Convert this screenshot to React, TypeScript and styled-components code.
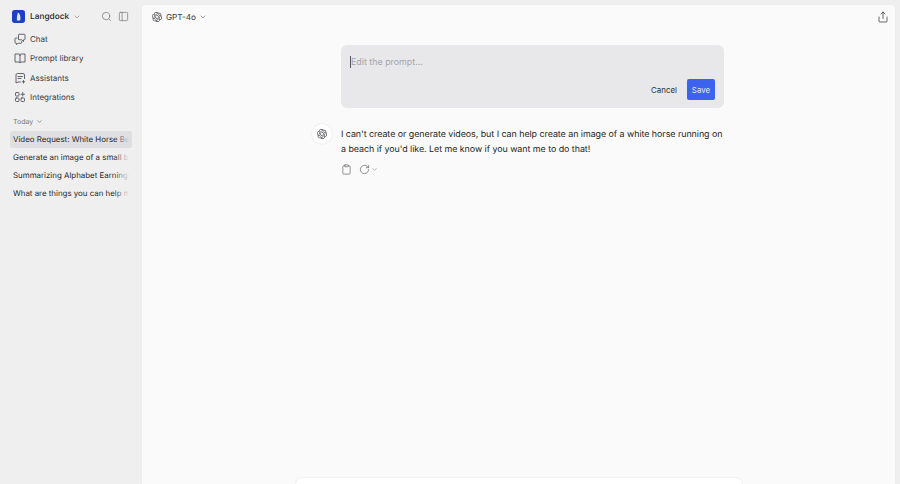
import React from 'react';
import styled, { createGlobalStyle } from 'styled-components';
import { ChevronDown, Clipboard, PanelLeft, RotateCw, Search, Share } from 'lucide-react';
import { SiOpenai } from 'react-icons/si';

const GlobalStyle = createGlobalStyle`
  html, body {
    margin: 0;
    padding: 0;
    height: 100%;
    overflow: hidden;
    background: #efeff0;
    font-family: Inter, "Liberation Sans", sans-serif;
    text-rendering: geometricPrecision;
  }
  #root {
    height: 100%;
  }
`;

const ICON_COLOR = '#55565c';

const LogoIcon = () => (
  <svg width="13" height="13" viewBox="0 0 12 12">
    <rect width="12" height="12" rx="2.5" fill="#1d3fc4" />
    <path d="M5.2 2.2 C6.6 2.4 7.4 4 7.6 5.6 C7.8 7.4 8 8.8 7.4 9.8 L4.4 9.8 C4.8 8.4 4.4 7.4 4.6 6 C4.8 4.6 5.4 3.4 5.2 2.2Z" fill="#dfe6fb" />
  </svg>
);

const ChatIcon = () => (
  <svg width="12" height="12" viewBox="0 0 24 24" fill="none" stroke={ICON_COLOR} strokeWidth="1.8" strokeLinecap="round" strokeLinejoin="round">
    <path d="M9 13V4a1.5 1.5 0 0 1 1.5-1.5h10A1.5 1.5 0 0 1 22 4v8a1.5 1.5 0 0 1-1.5 1.5H19V17l-3.5-3.5H11" />
    <path d="M6 10H3.5A1.5 1.5 0 0 0 2 11.5V19a1.5 1.5 0 0 0 1.5 1.5H5V23l3.5-2.5H14a1.5 1.5 0 0 0 1.5-1.5v-2" />
  </svg>
);

const LibraryIcon = () => (
  <svg width="12" height="12" viewBox="0 0 24 24" fill="none" stroke={ICON_COLOR} strokeWidth="1.8" strokeLinecap="round" strokeLinejoin="round">
    <path d="M12 6.5C12 5 11 4 9.5 4H2v16h8c1.1 0 2 .9 2 1.5" />
    <path d="M12 6.5C12 5 13 4 14.5 4H22v16h-8c-1.1 0-2 .9-2 1.5V6.5Z" />
  </svg>
);

const AssistantsIcon = () => (
  <svg width="12" height="12" viewBox="0 0 24 24" fill="none" stroke={ICON_COLOR} strokeWidth="1.8" strokeLinecap="round" strokeLinejoin="round">
    <path d="M13 20H8l-4 2V6a3 3 0 0 1 3-3h11a3 3 0 0 1 3 3v7" />
    <path d="M8 9h9M8 13h6" />
    <path d="M19 17v5M16.5 19.5h5" />
  </svg>
);

const IntegrationsIcon = () => (
  <svg width="12" height="12" viewBox="0 0 24 24" fill="none" stroke={ICON_COLOR} strokeWidth="1.8" strokeLinecap="round" strokeLinejoin="round">
    <rect x="3" y="3" width="7" height="7" rx="1.5" />
    <rect x="3" y="14" width="7" height="7" rx="1.5" />
    <rect x="14" y="14" width="7" height="7" rx="1.5" />
    <path d="M17.5 3v7M14 6.5h7" />
  </svg>
);

const navItems = [
  { label: 'Chat', icon: <ChatIcon /> },
  { label: 'Prompt library', icon: <LibraryIcon /> },
  { label: 'Assistants', icon: <AssistantsIcon /> },
  { label: 'Integrations', icon: <IntegrationsIcon /> },
];

const chats = [
  'Video Request: White Horse Be',
  'Generate an image of a small be',
  'Summarizing Alphabet Earnings',
  'What are things you can help m',
];

export default function App() {
  return (
    <Page>
      <GlobalStyle />
      <Sidebar>
        <BrandRow>
          <LogoIcon />
          <BrandName>Langdock</BrandName>
          <ChevronDown size={8} color="#8a8b90" />
          <BrandActions>
            <Search size={11} color="#77787d" strokeWidth={1.6} />
            <PanelLeft size={11} color="#77787d" strokeWidth={1.6} />
          </BrandActions>
        </BrandRow>
        <NavList>
          {navItems.map(item => (
            <NavItem key={item.label}>
              {item.icon}
              <span>{item.label}</span>
            </NavItem>
          ))}
        </NavList>
        <SectionLabel>
          Today
          <ChevronDown size={7} color="#77787d" strokeWidth={2.4} />
        </SectionLabel>
        <ChatList>
          {chats.map((chat, index) => (
            <ChatItem key={chat} $active={index === 0}>
              <ChatTitle>{chat}</ChatTitle>
              <ChatFade $active={index === 0} />
            </ChatItem>
          ))}
        </ChatList>
      </Sidebar>
      <Main>
        <TopBar>
          <ModelPicker>
            <SiOpenai size={10} color="#4b4c52" />
            <ModelName>GPT-4o</ModelName>
            <ChevronDown size={8} color="#77787d" />
          </ModelPicker>
          <Share size={12} color="#4b4c52" strokeWidth={1.7} />
        </TopBar>
        <Conversation>
          <Column>
            <EditBox>
              <PromptInput placeholder="Edit the prompt..." />
              <EditActions>
                <CancelButton>Cancel</CancelButton>
                <SaveButton>Save</SaveButton>
              </EditActions>
            </EditBox>
            <Answer>
              <AnswerAvatar>
                <SiOpenai size={10} color="#4b4c52" />
              </AnswerAvatar>
              <AnswerText>
                I can't create or generate videos, but I can help create an image of a white horse running on a
                beach if you'd like. Let me know if you want me to do that!
              </AnswerText>
            </Answer>
            <AnswerTools>
              <Clipboard size={11} color="#6b6c72" strokeWidth={1.6} />
              <RegenerateGroup>
                <RotateCw size={11} color="#6b6c72" strokeWidth={1.6} />
                <ChevronDown size={7} color="#8a8b90" />
              </RegenerateGroup>
            </AnswerTools>
          </Column>
        </Conversation>
        <Composer />
      </Main>
    </Page>
  );
}

const Page = styled.div`
  display: flex;
  height: 484px;
  width: 900px;
  overflow: hidden;
  background: #efeff0;
`;

const Sidebar = styled.aside`
  width: 142px;
  flex-shrink: 0;
  box-sizing: border-box;
  padding: 5px 10px 0 10px;
`;

const BrandRow = styled.div`
  display: flex;
  align-items: center;
  height: 23px;
  padding-left: 2px;
  gap: 5px;
`;

const BrandName = styled.span`
  font-size: 8.3px;
  font-weight: 500;
  margin-right: -1px;
  color: #26272b;
`;

const BrandActions = styled.div`
  display: flex;
  align-items: center;
  gap: 6px;
  margin-left: auto;
  padding-right: 3px;
`;

const NavList = styled.nav`
  display: flex;
  flex-direction: column;
  margin-top: 1.5px;
`;

const NavItem = styled.div`
  display: flex;
  align-items: center;
  gap: 4px;
  height: 19.3px;
  padding-left: 4px;
  font-size: 8px;
  color: #37383d;
`;

const SectionLabel = styled.div`
  display: flex;
  align-items: center;
  gap: 3px;
  height: 14px;
  margin-top: 8px;
  padding-left: 3px;
  font-size: 7px;
  color: #77787d;
`;

const ChatList = styled.div`
  display: flex;
  flex-direction: column;
  gap: 1px;
  margin-top: 2px;
`;

const ChatItem = styled.div<{ $active: boolean }>`
  position: relative;
  height: 17px;
  display: flex;
  align-items: center;
  padding-left: 3px;
  border-radius: 3px;
  overflow: hidden;
  background: ${props => (props.$active ? '#dfdfe2' : 'transparent')};
`;

const ChatTitle = styled.span`
  font-size: 7.9px;
  color: #26272b;
  white-space: nowrap;
`;

const ChatFade = styled.span<{ $active: boolean }>`
  position: absolute;
  top: 0;
  right: 0;
  bottom: 0;
  width: 18px;
  background: linear-gradient(
    to right,
    ${props => (props.$active ? 'rgba(223, 223, 226, 0)' : 'rgba(239, 239, 240, 0)')},
    ${props => (props.$active ? '#dfdfe2' : '#efeff0')} 85%
  );
`;

const Main = styled.main`
  width: 753px;
  height: 479px;
  margin-top: 5px;
  display: flex;
  flex-direction: column;
  overflow: hidden;
  background: #fafafa;
  border-radius: 3px 3px 0 0;
  box-shadow: 0 0 1px rgba(0, 0, 0, 0.08);
`;

const TopBar = styled.header`
  display: flex;
  align-items: center;
  justify-content: space-between;
  height: 23px;
  flex-shrink: 0;
  padding: 0 6px 0 10px;
`;

const ModelPicker = styled.div`
  display: flex;
  align-items: center;
  gap: 4px;
  font-size: 8.2px;
  color: #37383d;
`;

const ModelName = styled.span`
  margin-right: -1px;
`;

const Conversation = styled.div`
  flex: 1;
  display: flex;
  justify-content: center;
  padding-top: 17px;
`;

const Column = styled.div`
  width: 383px;
  margin-left: 28px;
`;

const EditBox = styled.div`
  height: 63px;
  box-sizing: border-box;
  display: flex;
  flex-direction: column;
  padding: 11px 9px 8px 9px;
  background: #e8e8ea;
  border-radius: 6px;
`;

const PromptInput = styled.input`
  border: none;
  outline: none;
  padding: 0;
  background: transparent;
  font-family: inherit;
  font-size: 8.9px;
  line-height: 12px;
  color: #37383d;
  border-left: 1px solid #55565c;

  &::placeholder {
    color: #a4a5aa;
  }
`;

const EditActions = styled.div`
  display: flex;
  align-items: center;
  justify-content: flex-end;
  gap: 10px;
  margin-top: auto;
`;

const CancelButton = styled.button`
  border: none;
  padding: 0;
  background: transparent;
  font-family: inherit;
  font-size: 7.9px;
  color: #2c2d31;
`;

const SaveButton = styled.button`
  width: 28px;
  height: 21px;
  border: none;
  padding: 0;
  border-radius: 2px;
  background: #3c62ee;
  font-family: inherit;
  font-size: 7.9px;
  color: #e6ebff;
`;

const Answer = styled.div`
  position: relative;
  margin-top: 18.5px;
`;

const AnswerAvatar = styled.div`
  position: absolute;
  left: -29px;
  top: -3px;
  width: 20px;
  height: 20px;
  display: flex;
  align-items: center;
  justify-content: center;
  border-radius: 50%;
  background: #fff;
  box-shadow: 0 0 2px rgba(0, 0, 0, 0.12);
`;

const AnswerText = styled.p`
  margin: 0;
  font-size: 8.9px;
  letter-spacing: -0.04px;
  line-height: 15.7px;
  color: #1c1d21;
`;

const AnswerTools = styled.div`
  display: flex;
  align-items: center;
  gap: 7px;
  margin-top: 6.5px;
`;

const RegenerateGroup = styled.div`
  display: flex;
  align-items: center;
  gap: 1px;
`;

const Composer = styled.div`
  flex-shrink: 0;
  width: 446px;
  height: 6px;
  margin: 0 auto;
  background: #fff;
  border-radius: 8px 8px 0 0;
  box-shadow: 0 0 2px rgba(0, 0, 0, 0.14);
`;
